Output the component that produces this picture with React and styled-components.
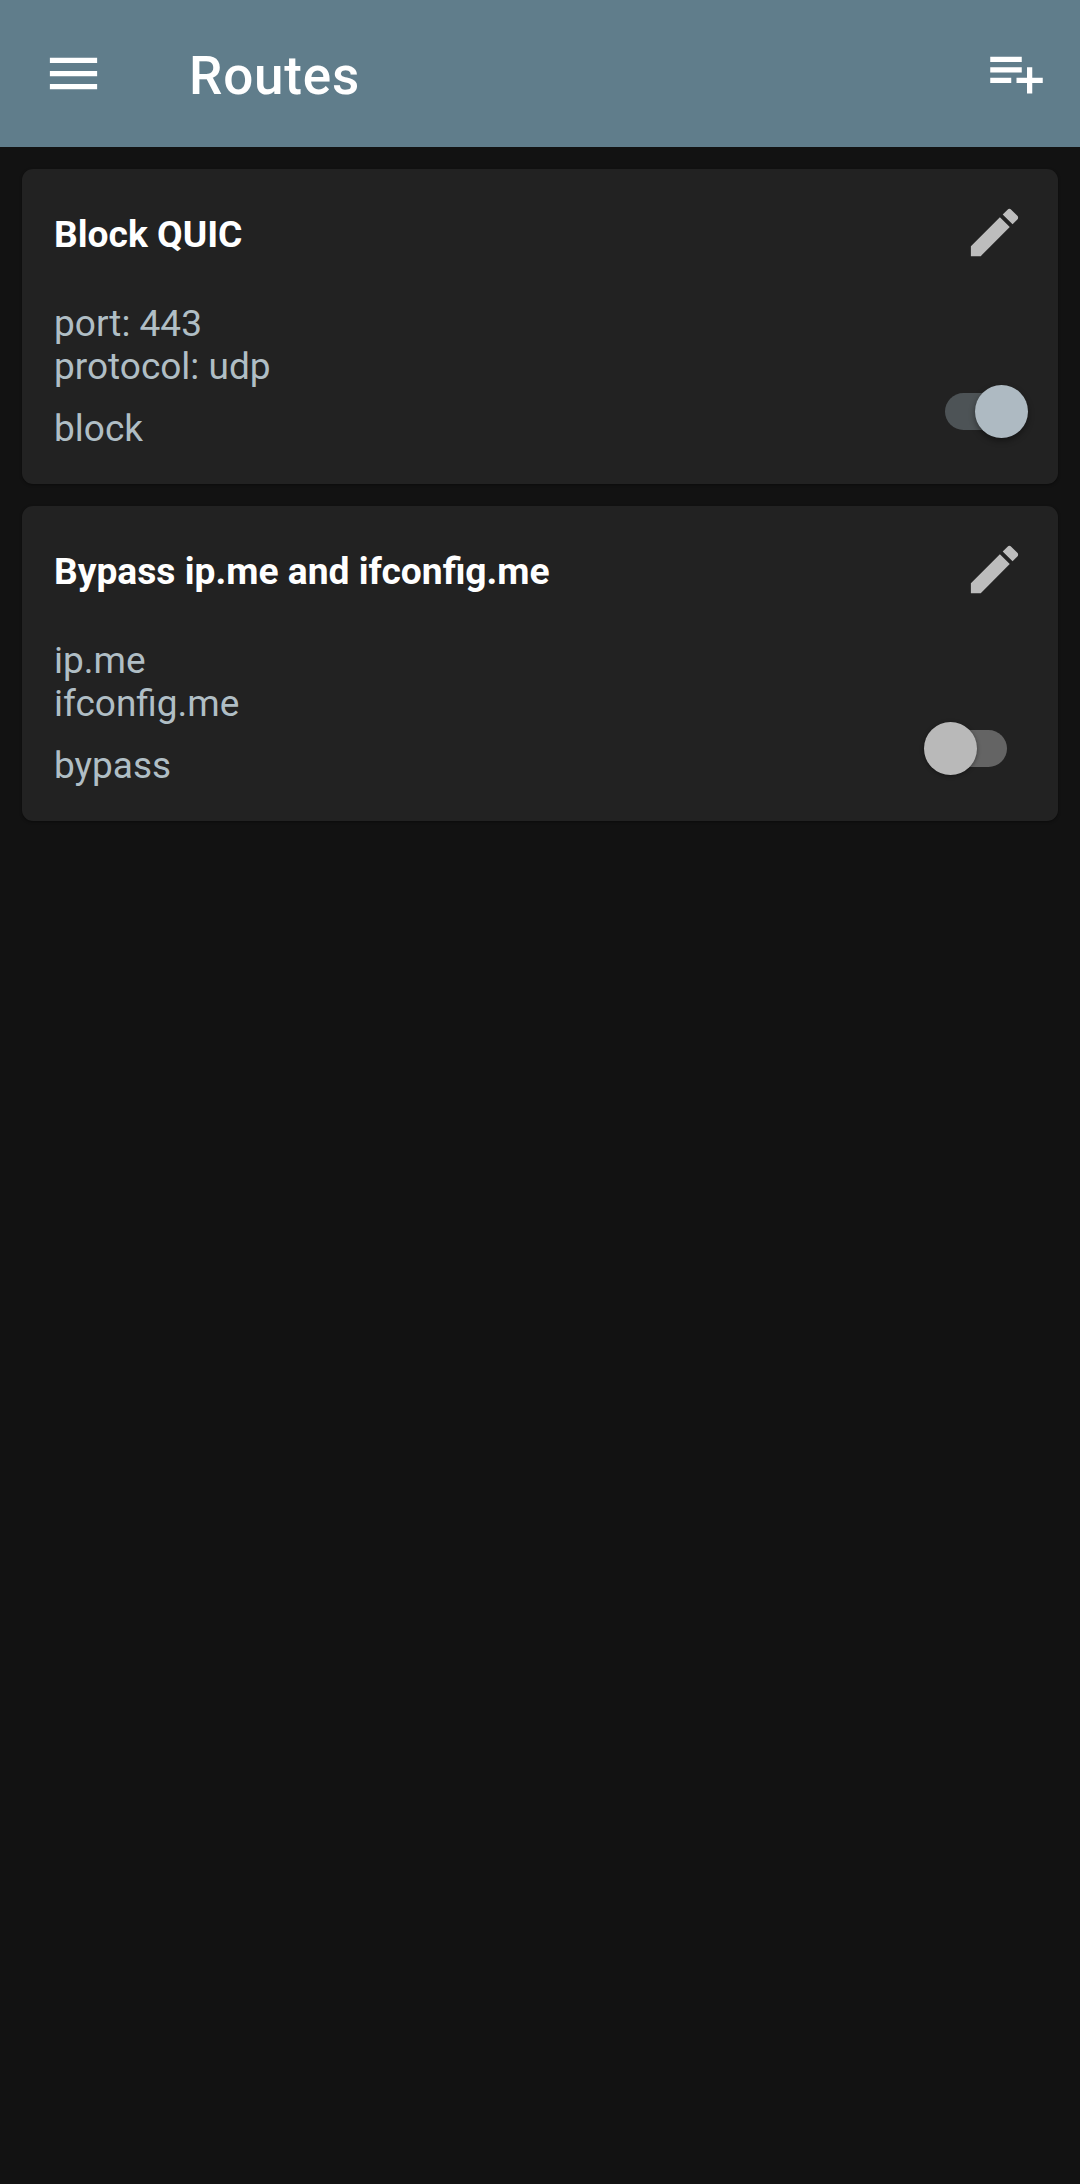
import React, { useState } from "react";
import styled, { createGlobalStyle } from "styled-components";

const GlobalStyle = createGlobalStyle`
  * { box-sizing: border-box; }
  html, body { margin: 0; background: #121212; }
  body { font-family: Roboto, "Noto Sans", sans-serif; }
`;

const Screen = styled.div`
  display: flex;
  flex-direction: column;
  min-height: 100vh;
  background: #121212;
`;

const AppBar = styled.header`
  display: flex;
  align-items: flex-start;
  height: 147px;
  padding: 42px 32px 0 42px;
  background: #607d8b;
  color: #ffffff;
`;

const AppTitle = styled.h1`
  flex: 1;
  margin: 3px 0 0 84px;
  font-size: 53px;
  line-height: 62px;
  font-weight: 500;
  letter-spacing: 0.8px;
`;

const IconButton = styled.button`
  display: flex;
  flex: none;
  width: 63px;
  height: 63px;
  margin-top: ${(p) => p.$shift || 0}px;
  padding: 0;
  border: 0;
  background: none;
  color: ${(p) => p.$color || "#ffffff"};
  cursor: pointer;
`;

const Glyph = styled.svg`
  display: block;
  width: 63px;
  height: 63px;
  fill: currentColor;
`;

const RouteList = styled.main`
  display: flex;
  flex-direction: column;
  gap: 22px;
  padding: 22px;
`;

const Card = styled.article`
  display: flex;
  flex-direction: column;
  justify-content: space-between;
  height: 315px;
  padding: 32px 30px 34px 32px;
  border-radius: 11px;
  background: #222222;
  box-shadow: 0 1px 3px rgba(0, 0, 0, 0.4);
`;

const CardHeader = styled.div`
  display: flex;
  justify-content: space-between;
  padding-right: 2px;
`;

const RouteName = styled.h2`
  margin: 12px 0 0;
  font-size: 37.2px;
  line-height: 43px;
  font-weight: 700;
  color: #ffffff;
`;

const CardBody = styled.div`
  display: flex;
  justify-content: space-between;
  align-items: flex-end;
`;

const Details = styled.div`
  display: flex;
  flex-direction: column;
  gap: 19px;
  color: #b0bec5;
  font-size: 37px;
  line-height: 43px;
`;

const Rules = styled.div`
  white-space: pre-line;
`;

const Outbound = styled.div``;

const Toggle = styled.button`
  display: flex;
  align-items: center;
  justify-content: center;
  position: relative;
  width: 104px;
  height: 53px;
  margin-bottom: 12px;
  padding: 0;
  border: 0;
  background: none;
  cursor: pointer;
`;

const Track = styled.span`
  width: 62px;
  height: 37px;
  border-radius: 19px;
  background: ${(p) => (p.$on ? "#4d5356" : "#646464")};
`;

const Thumb = styled.span`
  position: absolute;
  top: 0;
  left: ${(p) => (p.$on ? 51 : 0)}px;
  width: 53px;
  height: 53px;
  border-radius: 50%;
  background: ${(p) => (p.$on ? "#aebac2" : "#b9b9b9")};
  box-shadow: ${(p) =>
    p.$on ? "0 3px 6px rgba(0, 0, 0, 0.4)" : "0 1px 4px rgba(0, 0, 0, 0.4)"};
`;

const PATHS = {
  menu: "M3 18h18v-2H3v2zm0-5h18v-2H3v2zm0-7v2h18V6H3z",
  playlistAdd:
    "M14 10H2v2h12v-2zm0-4H2v2h12V6zm4 8v-4h-2v4h-4v2h4v4h2v-4h4v-2h-4zM2 16h8v-2H2v2z",
  edit:
    "M3 17.25V21h3.75L17.81 9.94l-3.75-3.75L3 17.25zM20.71 7.04c.39-.39.39-1.02 0-1.41l-2.34-2.34c-.39-.39-1.02-.39-1.41 0l-1.83 1.83 3.75 3.75 1.83-1.83z",
};

function Icon({ name }) {
  return (
    <Glyph viewBox="0 0 24 24" aria-hidden="true">
      <path d={PATHS[name]} />
    </Glyph>
  );
}

function RouteCard({ name, rules, outbound, enabled }) {
  const [on, setOn] = useState(enabled);
  return (
    <Card>
      <CardHeader>
        <RouteName>{name}</RouteName>
        <IconButton $color="#bdbdbd" aria-label="Edit">
          <Icon name="edit" />
        </IconButton>
      </CardHeader>
      <CardBody>
        <Details>
          <Rules>{rules.join("\n")}</Rules>
          <Outbound>{outbound}</Outbound>
        </Details>
        <Toggle role="switch" aria-checked={on} onClick={() => setOn(!on)}>
          <Track $on={on} />
          <Thumb $on={on} />
        </Toggle>
      </CardBody>
    </Card>
  );
}

const ROUTES = [
  { name: "Block QUIC", rules: ["port: 443", "protocol: udp"], outbound: "block", enabled: true },
  { name: "Bypass ip.me and ifconfig.me", rules: ["ip.me", "ifconfig.me"], outbound: "bypass", enabled: false },
];

export default function App() {
  return (
    <Screen>
      <GlobalStyle />
      <AppBar>
        <IconButton aria-label="Menu">
          <Icon name="menu" />
        </IconButton>
        <AppTitle>Routes</AppTitle>
        <IconButton $shift={-1} aria-label="Add route">
          <Icon name="playlistAdd" />
        </IconButton>
      </AppBar>
      <RouteList>
        {ROUTES.map((route) => (
          <RouteCard key={route.name} {...route} />
        ))}
      </RouteList>
    </Screen>
  );
}
